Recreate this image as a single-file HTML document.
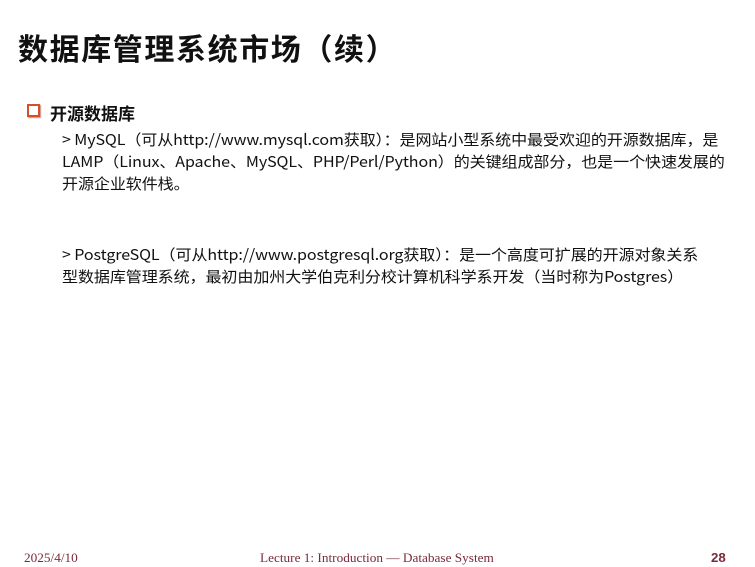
<!DOCTYPE html>
<html><head><meta charset="utf-8"><style>
body{margin:0;width:755px;height:567px;background:#fff;position:relative;overflow:hidden;font-family:"Liberation Sans","Noto Sans CJK SC",sans-serif;color:#111}
.t{position:absolute;left:18px;top:25px;font-size:30px;font-weight:bold;letter-spacing:1.6px;white-space:nowrap}
.box{position:absolute;left:27px;top:104px;width:9px;height:9px;border:2px solid #d4502a;background:#fff;box-shadow:1px 1px 1px #c88}
.h{position:absolute;left:50px;top:100px;font-size:17px;font-weight:bold}
.p{position:absolute;left:62px;font-family:"Noto Sans CJK SC",sans-serif;font-size:15px;line-height:22px;white-space:nowrap;letter-spacing:-0.1px;transform:scaleX(1.07);transform-origin:0 0}
.f{position:absolute;top:550px;font-family:"Liberation Serif",serif;font-size:13px;color:#7a2a3a;transform:scaleX(1.02);transform-origin:0 0}
</style></head><body>
<div class="t">数据库管理系统市场（续）</div>
<div class="box"></div>
<div class="h">开源数据库</div>
<div class="p" style="top:129px">&gt; MySQL（可从http://www.mysql.com获取）：是网站小型系统中最受欢迎的开源数据库，是<br>LAMP（Linux、Apache、MySQL、PHP/Perl/Python）的关键组成部分，也是一个快速发展的<br>开源企业软件栈。</div>
<div class="p" style="top:244px">&gt; PostgreSQL（可从http://www.postgresql.org获取）：是一个高度可扩展的开源对象关系<br>型数据库管理系统，最初由加州大学伯克利分校计算机科学系开发（当时称为Postgres）</div>
<div class="f" style="left:24px">2025/4/10</div>
<div class="f" style="left:260px">Lecture 1: Introduction — Database System</div>
<div class="f" style="left:711px;font-family:'Liberation Sans',sans-serif;font-size:13px;top:550px;font-weight:bold">28</div>
</body></html>
